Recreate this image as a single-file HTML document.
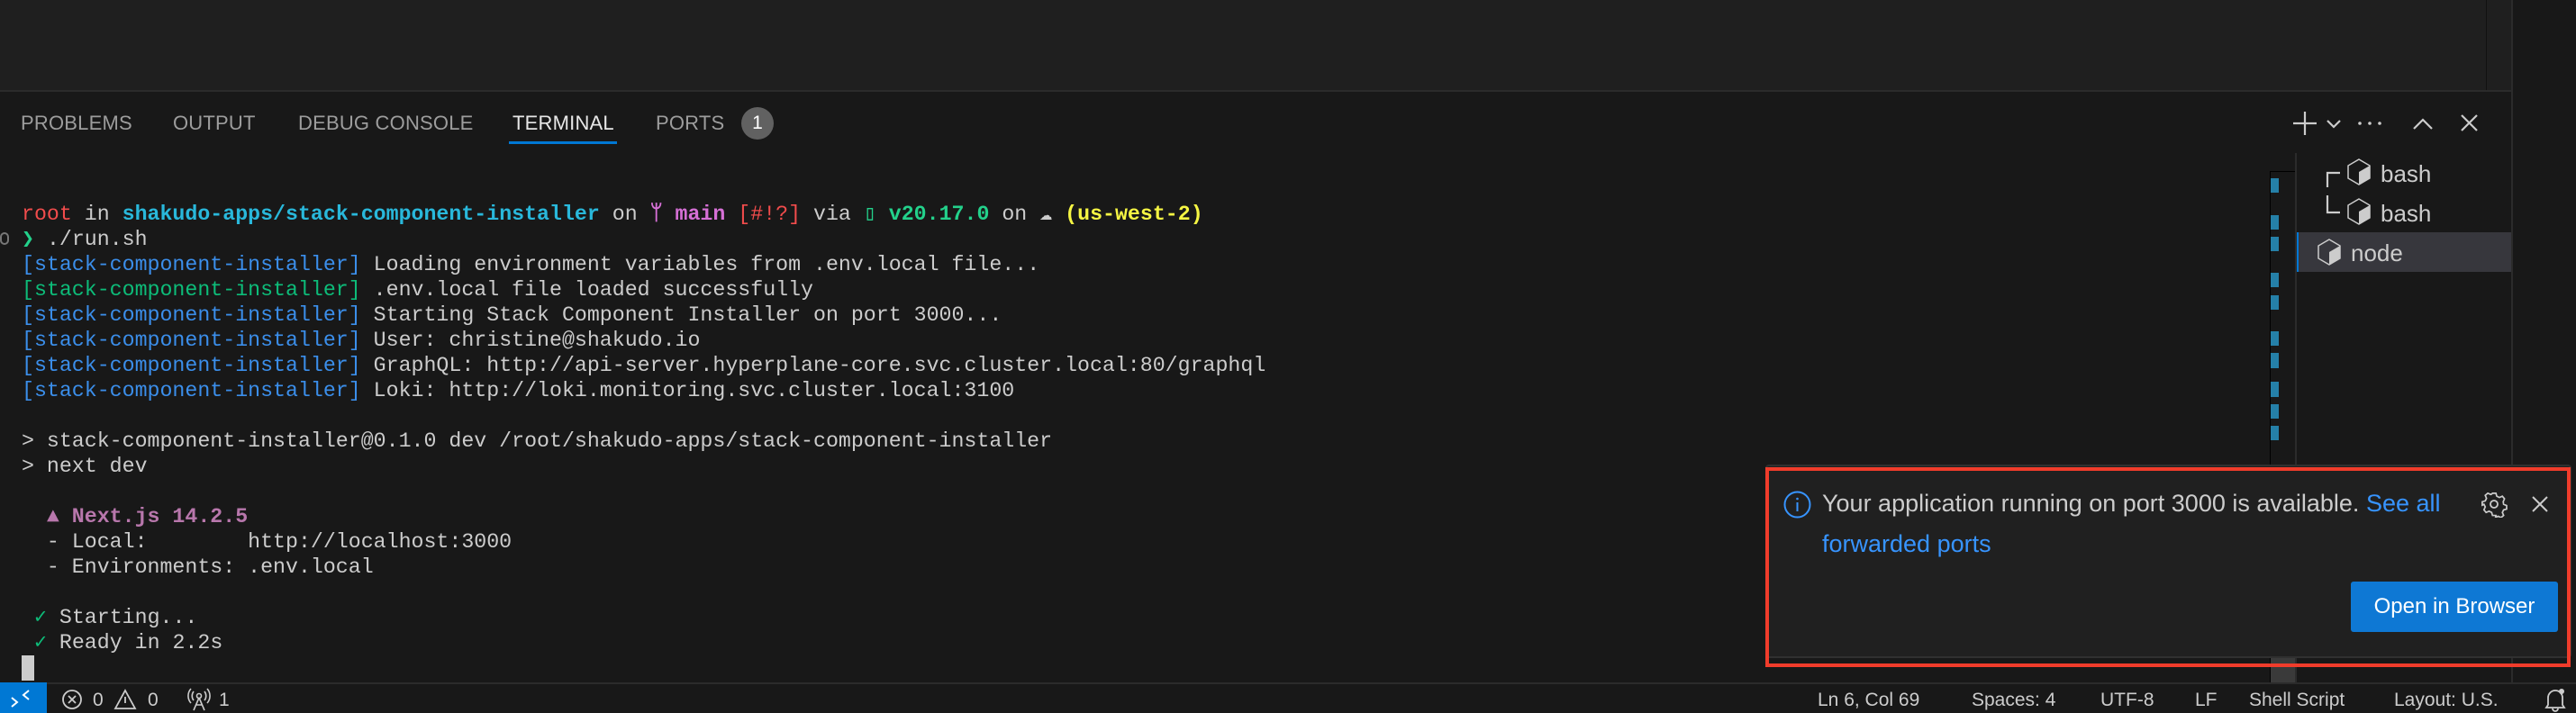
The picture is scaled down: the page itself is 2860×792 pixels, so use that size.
<!DOCTYPE html>
<html><head><meta charset="utf-8"><style>
*{margin:0;padding:0;box-sizing:border-box}
body{width:2860px;height:792px;background:#181818;position:relative;overflow:hidden;font-family:"Liberation Sans",sans-serif;color:#cccccc}
.a{position:absolute;white-space:pre}
.tab{position:absolute;top:124px;font-size:22px;color:#9d9d9d;letter-spacing:0.2px}
.term{position:absolute;left:24px;top:224px;font-family:"Liberation Mono","DejaVu Sans Mono",monospace;font-size:23.25px;line-height:28px;color:#cccccc;white-space:pre}
.r{color:#f14c4c}.c{color:#29b8db;font-weight:bold}.m{color:#d670d6;font-weight:bold}.g{color:#23d18b;font-weight:bold}.y{color:#f5f543;font-weight:bold}
.b{color:#3b8eea}.gr{color:#0dbc79}.p{color:#b877ac;font-weight:bold}
.mk{position:absolute;left:2521px;width:9px;background:#2580a8}
.st{position:absolute;top:766px;font-size:21px;color:#cccccc}
</style></head><body>
<div class="a" style="left:0;top:0;width:2788px;height:100px;background:#1f1f1f"></div>
<div class="a" style="left:2760px;top:0;width:1px;height:100px;background:#111"></div>
<div class="a" style="left:0;top:100px;width:2788px;height:2px;background:#2b2b2b"></div>
<div class="a" style="left:2788px;top:0;width:2px;height:792px;background:#2b2b2b"></div>

<div class="tab" style="left:23px">PROBLEMS</div>
<div class="tab" style="left:192px">OUTPUT</div>
<div class="tab" style="left:331px">DEBUG CONSOLE</div>
<div class="tab" style="left:569px;color:#e7e7e7">TERMINAL</div>
<div class="a" style="left:565px;top:157px;width:120px;height:3px;background:#0078d4"></div>
<div class="tab" style="left:728px">PORTS</div>
<div class="a" style="left:823px;top:119px;width:36px;height:36px;border-radius:18px;background:#616161;color:#fff;font-size:21px;text-align:center;line-height:36px">1</div>

<svg class="a" style="left:2540px;top:118px" width="230" height="40" viewBox="0 0 230 40" fill="none" stroke="#cccccc" stroke-width="2.2">
<path d="M19 6V32M6 19H32"/><path d="M44 16l7 7 7-7"/>
<circle cx="80" cy="19" r="1.8" fill="#ccc" stroke="none"/><circle cx="91" cy="19" r="1.8" fill="#ccc" stroke="none"/><circle cx="102" cy="19" r="1.8" fill="#ccc" stroke="none"/>
<path d="M140 25l10-10 10 10"/><path d="M193 10l17 17M210 10l-17 17"/>
</svg>

<div class="term"><span class="r">root</span> in <span class="c">shakudo-apps/stack-component-installer</span> on <span class="m">ᛘ main</span> <span class="r">[#!?]</span> via <span class="g">▯ v20.17.0</span> on ☁ <span class="y">(us-west-2)</span>
<span class="g">❯</span> ./run.sh
<span class="b">[stack-component-installer]</span> Loading environment variables from .env.local file...
<span class="gr">[stack-component-installer]</span> .env.local file loaded successfully
<span class="b">[stack-component-installer]</span> Starting Stack Component Installer on port 3000...
<span class="b">[stack-component-installer]</span> User: christine@shakudo.io
<span class="b">[stack-component-installer]</span> GraphQL: http://api-server.hyperplane-core.svc.cluster.local:80/graphql
<span class="b">[stack-component-installer]</span> Loki: http://loki.monitoring.svc.cluster.local:3100

&gt; stack-component-installer@0.1.0 dev /root/shakudo-apps/stack-component-installer
&gt; next dev

  <span class="p">▲ Next.js 14.2.5</span>
  - Local:        http://localhost:3000
  - Environments: .env.local

 <span class="gr">✓</span> Starting...
 <span class="gr">✓</span> Ready in 2.2s</div>
<div class="a" style="left:0;top:258px;width:10px;height:14px;border:2px solid #777;border-radius:7px"></div>
<div class="a" style="left:24px;top:728px;width:14px;height:28px;background:#cccccc"></div>

<div class="a" style="left:2520px;top:190px;width:1px;height:568px;background:#000"></div>
<div class="a" style="left:2520px;top:190px;width:29px;height:1px;background:#000"></div>
<div class="mk" style="top:198px;height:16px"></div>
<div class="mk" style="top:239px;height:16px"></div>
<div class="mk" style="top:263px;height:16px"></div>
<div class="mk" style="top:303px;height:16px"></div>
<div class="mk" style="top:328px;height:16px"></div>
<div class="mk" style="top:368px;height:16px"></div>
<div class="mk" style="top:392px;height:17px"></div>
<div class="mk" style="top:424px;height:17px"></div>
<div class="mk" style="top:449px;height:16px"></div>
<div class="mk" style="top:473px;height:16px"></div>
<div class="a" style="left:2521px;top:600px;width:27px;height:158px;background:#3a3a3a"></div>

<div class="a" style="left:2548px;top:170px;width:2px;height:588px;background:#2b2b2b"></div>
<svg class="a" style="left:2580px;top:180px" width="20" height="60" fill="none" stroke="#cccccc" stroke-width="2.2"><path d="M4 28V12H18"/><path d="M4 37V56H18"/></svg>
<svg class="a" style="left:2604px;top:175px" width="30" height="32" viewBox="0 0 30 32"><path d="M15 2L27 9V23L15 30L3 23V9Z" fill="none" stroke="#ccc" stroke-width="1.5"/><path d="M15 16L27 9V23L15 30Z" fill="#ccc"/></svg>
<div class="a" style="left:2643px;top:178px;font-size:26px;color:#cccccc">bash</div>
<svg class="a" style="left:2604px;top:219px" width="30" height="32" viewBox="0 0 30 32"><path d="M15 2L27 9V23L15 30L3 23V9Z" fill="none" stroke="#ccc" stroke-width="1.5"/><path d="M15 16L27 9V23L15 30Z" fill="#ccc"/></svg>
<div class="a" style="left:2643px;top:222px;font-size:26px;color:#cccccc">bash</div>
<div class="a" style="left:2550px;top:258px;width:238px;height:44px;background:#37373d"></div>
<div class="a" style="left:2550px;top:258px;width:2px;height:44px;background:#0078d4"></div>
<svg class="a" style="left:2571px;top:264px" width="30" height="32" viewBox="0 0 30 32"><path d="M15 2L27 9V23L15 30L3 23V9Z" fill="none" stroke="#ccc" stroke-width="1.5"/><path d="M15 16L27 9V23L15 30Z" fill="#ccc"/></svg>
<div class="a" style="left:2610px;top:266px;font-size:26px;color:#cccccc">node</div>

<div class="a" style="left:1960px;top:516px;width:895px;height:215px;background:#202020;border:2px solid #303030;border-radius:4px"></div>
<div class="a" style="left:1960px;top:519px;width:894px;height:222px;border:4px solid #f03c2b"></div>
<svg class="a" style="left:1980px;top:545px" width="31" height="31" viewBox="0 0 31 31" fill="none" stroke="#3794ff" stroke-width="2"><circle cx="15.5" cy="15.5" r="14"/><path d="M15.5 13V23"/><circle cx="15.5" cy="9" r="1.3" fill="#3794ff" stroke="none"/></svg>
<div class="a" style="left:2023px;top:544px;font-size:27px;color:#cccccc">Your application running on port 3000 is available. <span style="color:#3794ff">See all</span></div>
<div class="a" style="left:2023px;top:589px;font-size:27px;color:#3794ff">forwarded ports</div>
<svg class="a" style="left:2754px;top:545px" width="30" height="30" viewBox="0 0 30 30" fill="none" stroke="#ccc" stroke-width="1.8"><path d="M13 3h4l1 3.5 3 1.5 3.5-1.5 2.5 3-1.5 3.5.5 3 3.5 1.5v4l-3.5 1-1.5 3 1.5 3.5-3 2.5-3.5-1.5-3 1.5L17 29h-4l-1-3.5-3-1.5-3.5 1.5-2.5-3 1.5-3.5-1.5-3L1 17v-4l3.5-1 1.5-3L4.5 5.5 7.5 3 11 4.5l1-.5z" transform="scale(.95) translate(1 0)"/><circle cx="15" cy="15" r="4"/></svg>
<svg class="a" style="left:2810px;top:550px" width="20" height="20" fill="none" stroke="#ccc" stroke-width="2"><path d="M2 2l16 16M18 2L2 18"/></svg>
<div class="a" style="left:2610px;top:646px;width:230px;height:56px;background:#0e78d4;border-radius:3px;color:#fff;font-size:24px;text-align:center;line-height:56px">Open in Browser</div>

<div class="a" style="left:0;top:758px;width:2860px;height:34px;background:#181818;border-top:2px solid #2b2b2b"></div>
<div class="a" style="left:0;top:758px;width:52px;height:34px;background:#0078d4"></div>
<svg class="a" style="left:10px;top:765px" width="30" height="22" fill="none" stroke="#fff" stroke-width="2"><path d="M3 10l6 5-6 5"/><path d="M22 2l-6 5 6 5"/></svg>
<svg class="a" style="left:68px;top:764px" width="90" height="26" fill="none" stroke="#ccc" stroke-width="1.8"><circle cx="12" cy="13" r="10"/><path d="M8 9l8 8M16 9l-8 8"/><path d="M71 3L82 23H60Z"/><path d="M71 10v7"/></svg>
<div class="st" style="left:103px">0</div>
<div class="st" style="left:164px">0</div>
<svg class="a" style="left:208px;top:764px" width="26" height="26" fill="none" stroke="#ccc" stroke-width="1.6"><circle cx="13" cy="9" r="2.5"/><path d="M13 11L7 25M13 11l6 14M9 19h8"/><path d="M7 4a8 8 0 0 0 0 10M19 4a8 8 0 0 1 0 10M4 1a12 12 0 0 0 0 16M22 1a12 12 0 0 1 0 16"/></svg>
<div class="st" style="left:243px">1</div>
<div class="st" style="left:2018px">Ln 6, Col 69</div>
<div class="st" style="left:2189px">Spaces: 4</div>
<div class="st" style="left:2332px">UTF-8</div>
<div class="st" style="left:2437px">LF</div>
<div class="st" style="left:2497px">Shell Script</div>
<div class="st" style="left:2658px">Layout: U.S.</div>
<svg class="a" style="left:2824px;top:763px" width="26" height="28" fill="none" stroke="#ccc" stroke-width="1.8"><path d="M5 20V12a8 8 0 0 1 16 0v8l2 3H3z"/><path d="M10 24a3 3 0 0 0 6 0"/><circle cx="20" cy="5" r="3" fill="#ccc" stroke="none"/></svg>
</body></html>
